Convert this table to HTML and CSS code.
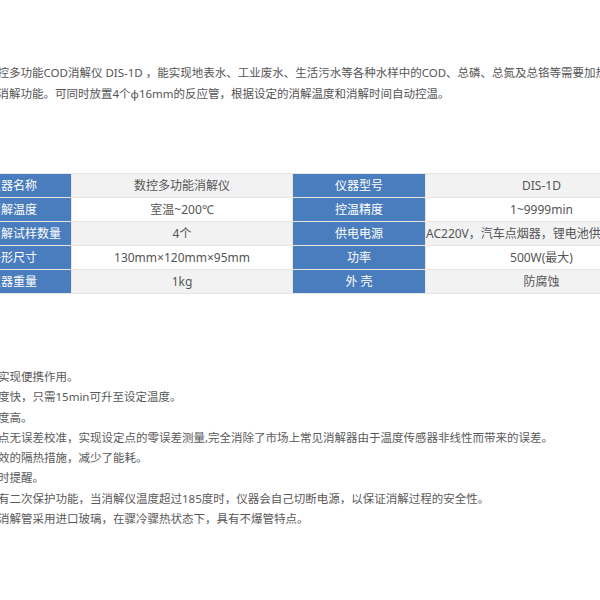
FILE: index.html
```html
<!DOCTYPE html>
<html lang="zh-CN">
<head>
<meta charset="utf-8">
<title>数控多功能COD消解仪</title>
<link rel="stylesheet" href="styles.css">
</head>
<body>
<div class="page">
  <p class="intro">数控多功能COD消解仪 DIS-1D ，能实现地表水、工业废水、生活污水等各种水样中的COD、总磷、总氮及总铬等需要加热消解的样品进<br>行消解功能。可同时放置4个φ16mm的反应管，根据设定的消解温度和消解时间自动控温。</p>

  <table class="spec">
    <colgroup>
      <col class="c1"><col class="c2"><col class="c3"><col class="c4">
    </colgroup>
    <tbody>
      <tr class="odd">
        <th class="lbl first">仪器名称</th><td>数控多功能消解仪</td>
        <th class="lbl">仪器型号</th><td>DIS-1D</td>
      </tr>
      <tr>
        <th class="lbl first">消解温度</th><td>室温~200℃</td>
        <th class="lbl">控温精度</th><td>1~9999min</td>
      </tr>
      <tr class="odd">
        <th class="lbl first">消解试样数量</th><td>4个</td>
        <th class="lbl">供电电源</th><td class="wide">AC220V，汽车点烟器，锂电池供电（选配）</td>
      </tr>
      <tr>
        <th class="lbl first">外形尺寸</th><td>130mm×120mm×95mm</td>
        <th class="lbl">功率</th><td>500W(最大)</td>
      </tr>
      <tr class="odd">
        <th class="lbl first">仪器重量</th><td>1kg</td>
        <th class="lbl">外 壳</th><td>防腐蚀</td>
      </tr>
    </tbody>
  </table>

  <ul class="features">
    <li>实现便携作用。</li>
    <li>度快，只需15min可升至设定温度。</li>
    <li>度高。</li>
    <li>点无误差校准，实现设定点的零误差测量,完全消除了市场上常见消解器由于温度传感器非线性而带来的误差。</li>
    <li>效的隔热措施，减少了能耗。</li>
    <li>时提醒。</li>
    <li>有二次保护功能，当消解仪温度超过185度时，仪器会自己切断电源，以保证消解过程的安全性。</li>
    <li>消解管采用进口玻璃，在骤冷骤热状态下，具有不爆管特点。</li>
  </ul>
</div>
</body>
</html>
```
FILE: styles.css
```css
html, body {
  margin: 0;
  padding: 0;
  background: #ffffff;
  overflow: hidden;
  width: 600px;
  height: 600px;
}

body {
  font-family: "Noto Sans", "Noto Sans CJK SC", sans-serif;
  font-size: 11.5px;
  color: #555555;
}

.page {
  margin-left: -14px;
  width: 700px;
  padding-top: 62px;
}

.intro {
  margin: 0;
  line-height: 21px;
  white-space: nowrap;
  color: #555555;
}

.spec {
  margin-top: 69px;
  border-collapse: collapse;
  table-layout: fixed;
  width: 671px;
  font-size: 12px;
}

.c1 { width: 85px; }
.c2 { width: 221px; }
.c3 { width: 133px; }
.c4 { width: 232px; }

.spec th,
.spec td {
  height: 23px;
  padding: 0;
  border: 1px solid #e6e6e6;
  font-weight: normal;
  text-align: center;
  white-space: nowrap;
  line-height: 23px;
}

.spec td {
  background: #ffffff;
  color: #555555;
}

.spec tr.odd td {
  background: #f2f2f2;
}

.spec th.lbl {
  background: #4a7dbe;
  color: #ffffff;
}

.spec th.first {
  text-align: left;
  padding-left: 2px;
}

.spec td.wide {
  overflow: visible;
}

.features {
  list-style: none;
  margin: 73px 0 0 0;
  padding: 0 0 0 12px;
  line-height: 20.3px;
  color: #5a5a5a;
}

.features li {
  white-space: nowrap;
}
```
